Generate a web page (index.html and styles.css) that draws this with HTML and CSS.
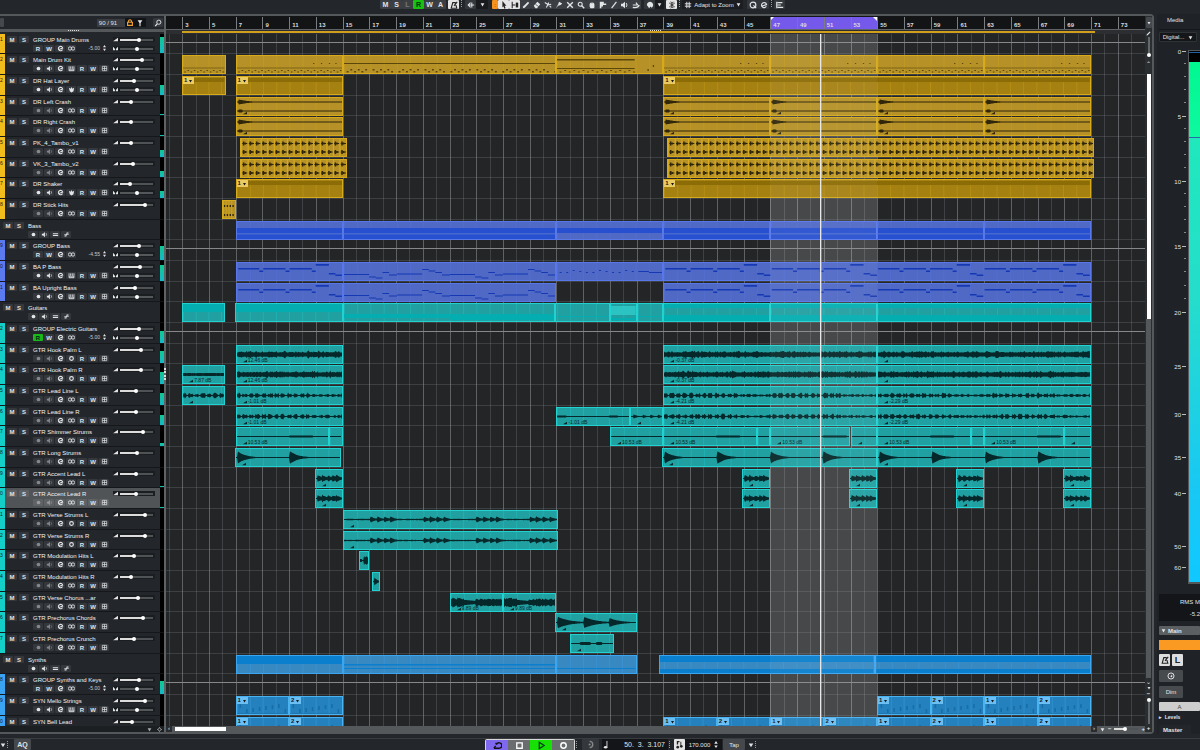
FILE: index.html
```html
<!DOCTYPE html>
<html lang="en">
<head>
<meta charset="utf-8">
<title>Project window</title>
<link rel="stylesheet" href="styles.css">
</head>
<body>
<svg class="defs" aria-hidden="true">
  <symbol id="i-rec" viewBox="0 0 8 8"><circle cx="4" cy="4" r="2.100"/></symbol>
  <symbol id="i-mon" viewBox="0 0 8 8"><path d="M1 3h1.500L4.500 1v6L2.500 5H1z"/><path d="M5.700 2.500q1.300 1.500 0 3" fill="none" stroke="currentColor" stroke-width=".8"/></symbol>
  <symbol id="i-edit" viewBox="0 0 8 8"><path d="M6.300 5.200A2.500 2.500 0 1 1 6.500 3.500L2.400 5" fill="none" stroke="currentColor" stroke-width="1.200"/></symbol>
  <symbol id="i-stereo" viewBox="0 0 8 8"><g fill="none" stroke="currentColor"><circle cx="2.300" cy="4" r="1.900"/><circle cx="5.700" cy="4" r="1.900"/></g></symbol>
  <symbol id="i-mono" viewBox="0 0 8 8"><circle cx="4" cy="4" r="2.100" fill="none" stroke="currentColor" stroke-width="1.300"/></symbol>
  <symbol id="i-keys" viewBox="0 0 8 8"><path d="M1.200 1.500v5h5.600v-5M3.100 1.500v3M4.900 1.500v3M1.200 5.500h5.600" fill="none" stroke="currentColor"/></symbol>
  <symbol id="i-drum" viewBox="0 0 8 8"><path d="M1 2l2 1 1-2 1 2 2-1-.7 4L4 7.500 2 6z"/></symbol>
  <symbol id="i-box" viewBox="0 0 8 8"><path d="M1.500 1.500h5v5h-5zM4 1.500v5M1.500 4h5" fill="none" stroke="currentColor" stroke-width=".8"/></symbol>
  <symbol id="i-eq" viewBox="0 0 8 8"><path d="M1 2.700h6v1H1zM1 4.700h6v1H1z"/></symbol>
  <symbol id="i-lines" viewBox="0 0 8 8"><path d="M1.500 5.500h3M3.500 2.500h3M2.500 6.500l3-5M1.500 4h5" fill="none" stroke="currentColor" stroke-width=".8"/></symbol>
  <symbol id="i-vol" viewBox="0 0 6 6"><path d="M0 5L6 1v4z"/></symbol>
  <symbol id="i-pan" viewBox="0 0 6 6"><path d="M0 1l2.500 2.500V5H0zM6 1L3.500 3.500V5H6z"/></symbol>
  <symbol id="i-down" viewBox="0 0 8 8"><path d="M1 2h6L4 7z"/></symbol>
  <symbol id="i-spin" viewBox="0 0 4 8"><path d="M0 3l2-3 2 3zM0 5l2 3 2-3z"/></symbol>
  <symbol id="i-lock" viewBox="0 0 10 10"><path d="M2 4h6v4H2zM3 4q0-3 2-3t2 3" fill="none" stroke="currentColor" stroke-width="1.400"/></symbol>
  <symbol id="i-filter" viewBox="0 0 10 10"><path d="M2 1.500h6L5.700 5v4H4.300V5z"/></symbol>
  <symbol id="i-find" viewBox="0 0 10 10"><circle cx="6" cy="4" r="2.600" fill="none" stroke="currentColor" stroke-width="1.200"/><path d="M4 6L1.500 9" stroke="currentColor" stroke-width="1.500"/></symbol>
  <symbol id="i-arrow" viewBox="0 0 10 10"><path d="M3 0l5 6H5.800L7 9l-1.500.6L4.300 6.600 3 8z"/></symbol>
  <symbol id="i-range" viewBox="0 0 10 10"><path d="M1.500 1v8M1.500 5h4" fill="none" stroke="currentColor" stroke-width="1.300"/><path d="M6 2h3v6H6z"/></symbol>
  <symbol id="i-pencil" viewBox="0 0 10 10"><path d="M1 9l.7-2.500L7.500 1 9 2.500 3.400 8.300z"/></symbol>
  <symbol id="i-erase" viewBox="0 0 10 10"><path d="M1 6l4.500-5L9 4 5 9H3z"/><path d="M3 4l4 3" stroke="#222" stroke-width=".8"/></symbol>
  <symbol id="i-cut" viewBox="0 0 10 10"><path d="M1 2l5 3M3 8l3-6M7 6l2 2M9 4L5 5" stroke="currentColor" stroke-width="1.400"/></symbol>
  <symbol id="i-glue" viewBox="0 0 10 10"><path d="M1 9l3-5 1-3 4 2-2 2-3 1z"/></symbol>
  <symbol id="i-x" viewBox="0 0 10 10"><path d="M1.500 1.500l7 7M8.500 1.500l-7 7" stroke="currentColor" stroke-width="1.700"/></symbol>
  <symbol id="i-zoom" viewBox="0 0 10 10"><circle cx="4" cy="4" r="2.500" fill="none" stroke="currentColor" stroke-width="1.400"/><path d="M6 6l3 3" stroke="currentColor" stroke-width="1.700"/></symbol>
  <symbol id="i-hand" viewBox="0 0 10 10"><path d="M2 4l1-2 1 1 1-2 1 2 1-1 1 2v4L7 9H3L2 7z"/></symbol>
  <symbol id="i-comp" viewBox="0 0 10 10"><path d="M1 1h5v2h3v2H5v2H3v2H1z"/></symbol>
  <symbol id="i-line" viewBox="0 0 10 10"><path d="M2 9l6-8" stroke="currentColor" stroke-width="1.500"/></symbol>
  <symbol id="i-speaker" viewBox="0 0 10 10"><path d="M0 3.500h2L5 1v8L2 6.500H0z"/><path d="M6.500 2.500q2 2.500 0 5" fill="none" stroke="currentColor" stroke-width="1.200"/></symbol>
  <symbol id="i-warp" viewBox="0 0 10 10"><path d="M1 5h6L5 2M1 8q7 1 8-3" fill="none" stroke="currentColor" stroke-width="1.500"/></symbol>
  <symbol id="i-color" viewBox="0 0 10 10"><path d="M1 5a4 4 0 1 1 6 3.500L5.500 7 4 9z"/></symbol>
  <symbol id="i-snap" viewBox="0 0 10 10"><path d="M5 1v8M1.500 2.500l7 5M8.500 2.500l-7 5M3 1l2 2 2-2M3 9l2-2 2 2" fill="none" stroke="currentColor" stroke-width="1"/></symbol>
  <symbol id="i-grid" viewBox="0 0 10 10"><path d="M3.500 1v8M6.500 1v8M1 3.500h8M1 6.500h8" stroke="currentColor" stroke-width="1.200"/></symbol>
  <symbol id="i-q" viewBox="0 0 10 10"><circle cx="5" cy="5" r="3.600" fill="none" stroke="currentColor" stroke-width="1.400"/><path d="M5.500 5.500L9 9" stroke="currentColor" stroke-width="1.500"/></symbol>
  <symbol id="i-align" viewBox="0 0 10 10"><path d="M1 1v8M2 2h6M2 5h4M2 8h7" stroke="currentColor" stroke-width="1.500"/></symbol>
  <symbol id="i-metro" viewBox="0 0 10 10"><path d="M1.500 9L3.500 2h3l2 7zM5 6l4-5" fill="none" stroke="currentColor" stroke-width="1.400"/></symbol>
  <symbol id="i-nudge" viewBox="0 0 10 10"><path d="M9 5H2M4.500 2L1.500 5l3 3M6 2v6" fill="none" stroke="currentColor" stroke-width="1.300"/></symbol>
  <symbol id="i-cycle" viewBox="0 0 10 10"><path d="M1 8h6a3 3 0 1 0-3-4M1 8l2-2.500M4 4L3 2" fill="none" stroke="currentColor" stroke-width="1.500"/></symbol>
  <symbol id="i-punch" viewBox="0 0 10 10"><path d="M4 1.500a3.500 3.500 0 0 1 0 7" fill="none" stroke="currentColor" stroke-width="1.500"/><circle cx="4" cy="5" r="1.200"/></symbol>
  <symbol id="i-stop" viewBox="0 0 10 10"><path d="M2 2h6v6H2z" fill="none" stroke="currentColor" stroke-width="1.500"/></symbol>
  <symbol id="i-play" viewBox="0 0 10 10"><path d="M2.500 1.500L8 5 2.500 8.500z" fill="none" stroke="currentColor" stroke-width="1.300"/></symbol>
  <symbol id="i-record" viewBox="0 0 10 10"><circle cx="5" cy="5" r="3" fill="none" stroke="currentColor" stroke-width="1.600"/></symbol>
  <symbol id="i-listen" viewBox="0 0 10 10"><circle cx="5" cy="5" r="3.800" fill="none" stroke="currentColor" stroke-width="1.200"/><path d="M6.500 3v4L4 5.500z"/></symbol>
  <symbol id="i-note" viewBox="0 0 10 10"><ellipse cx="4" cy="8" rx="2" ry="1.400"/><path d="M5.500 8V1" stroke="currentColor"/></symbol>
  <symbol id="i-tempo" viewBox="0 0 10 10"><path d="M2 1h3v1.500H3.500V5H2zM6 2h1v4H6z"/><circle cx="3" cy="8" r="1.500"/><circle cx="7" cy="7" r="1.500"/></symbol>
  <symbol id="i-gear" viewBox="0 0 10 10"><circle cx="5" cy="5" r="2.800" fill="none" stroke="currentColor" stroke-width="1.500"/><path d="M5 0v2M5 8v2M0 5h2M8 5h2" stroke="currentColor" stroke-width="1.300"/></symbol>
</svg>

<header class="toolbar">
  <div class="group states">
    <button>M</button><button>S</button><button class="off">L</button><button class="read">R</button><button>W</button><button>A</button>
  </div>
  <button class="lit" aria-label="Automation"><svg><use href="#i-metro"/></svg></button><span class="dots"></span>
  <div class="group nudge"><button aria-label="Auto-scroll"><svg><use href="#i-nudge"/></svg></button><button class="dark" aria-label="Auto-scroll options"><svg class="tri"><use href="#i-down"/></svg></button></div>
  <div class="group tools" id="tools"></div>
  <div class="group color"><button aria-label="Colour"><svg><use href="#i-color"/></svg></button><button class="dark" aria-label="Colour list"><svg class="tri"><use href="#i-down"/></svg></button></div>
  <button class="lit" aria-label="Snap"><svg><use href="#i-snap"/></svg></button><span class="dots"></span>
  <button class="adapt"><svg><use href="#i-grid"/></svg><span>Adapt to Zoom</span><svg class="tri"><use href="#i-down"/></svg></button>
  <div class="group"><button aria-label="Quantize"><svg><use href="#i-q"/></svg></button><button aria-label="Edit quantize"><svg><use href="#i-edit"/></svg></button></div><span class="dots"></span>
  <button aria-label="Align"><svg><use href="#i-align"/></svg></button>
</header>

<main class="workspace">
  <section class="project">
    <div class="panes">
      <aside class="tracklist">
        <div class="listhead">
          <button class="stub" aria-label="Add track"></button>
          <span class="count">90 / 91</span>
          <button class="orange" aria-label="Lock"><svg><use href="#i-lock"/></svg></button>
          <button aria-label="Filter"><svg><use href="#i-filter"/></svg></button>
          <button class="find" aria-label="Find track"><svg><use href="#i-find"/></svg></button>
        </div>
        <div class="split"><i class="grip"></i></div>
        <div class="tracks" id="tracks"></div>
        <div class="listfoot"><svg class="tri"><use href="#i-down"/></svg><svg><use href="#i-gear"/></svg></div>
      </aside>
      <div class="divider"><i></i></div>
      <section class="timeline">
        <div class="ruler" id="ruler"></div>
        <div class="split marker" id="marker"><i class="grip"></i></div>
        <div class="canvas" id="canvas"></div>
        <div class="hscroll">
          <span class="chev">‹</span><i class="hthumb"></i><span class="space"></span><span class="chev">›</span>
          <svg class="tri"><use href="#i-down"/></svg><b>−</b><input type="range" aria-label="Horizontal zoom" value="45" style="--v:45%"><b>+</b>
        </div>
      </section>
      <div class="vscroll">
        <button aria-label="Ruler options"><svg class="tri"><use href="#i-down"/></svg></button>
        <svg class="pen"><use href="#i-pencil"/></svg>
        <i class="rail"></i><i class="knob"></i><span class="chev up">⌃</span>
        <i class="vthumb"></i><i class="vrest"></i>
        <span class="chev">⌄</span><svg class="tri"><use href="#i-down"/></svg><b>−</b><i class="knob"></i><i class="rail low"></i><b>+</b>
      </div>
    </div>
  </section>

  <aside class="control">
    <div class="tabs">Media</div>
    <button class="scale">Digital... <svg class="tri"><use href="#i-down"/></svg></button>
    <div class="metering">
      <div class="marks" id="marks"></div>
      <div class="bar"><i class="peak"></i></div>
    </div>
    <div class="rms"><span>RMS M</span><span>-5.2</span></div>
    <button class="mainbtn"><svg class="tri"><use href="#i-down"/></svg>Main</button>
    <div class="orangebar"></div>
    <div class="pair"><button aria-label="Click"><svg><use href="#i-metro"/></svg></button><button>L</button></div>
    <button class="cr" aria-label="Listen"><svg><use href="#i-listen"/></svg></button>
    <button class="cr">Dim</button>
    <button class="cr a">A</button>
    <div class="levels">▸ &nbsp;Levels</div>
    <div class="master">Master</div>
  </aside>
</main>

<footer class="transport">
  <div class="left"><svg class="tri"><use href="#i-down"/></svg><span class="dots"></span><button>AQ</button></div>
  <div class="keys">
    <button class="cycle" aria-label="Cycle"><svg><use href="#i-cycle"/></svg></button><button aria-label="Stop"><svg><use href="#i-stop"/></svg></button><button class="play" aria-label="Play"><svg><use href="#i-play"/></svg></button><button aria-label="Record"><svg><use href="#i-record"/></svg></button>
  </div>
  <span class="dots"></span>
  <button class="punch" aria-label="Punch"><svg><use href="#i-punch"/></svg></button>
  <div class="pos"><svg><use href="#i-note"/></svg><span>50. &nbsp;3. &nbsp;3.107</span></div>
  <span class="dots"></span>
  <button class="tempo" aria-label="Tempo track"><svg><use href="#i-tempo"/></svg></button>
  <div class="bpm"><span>170.000</span><svg class="spin"><use href="#i-spin"/></svg></div>
  <button class="tap">Tap</button>
  <svg class="tri"><use href="#i-down"/></svg><span class="dots"></span>
</footer>
<script src="app.js"></script>
</body>
</html>
```
FILE: styles.css
```css
* { box-sizing: border-box; }
body {
  margin: 0; height: 100vh; overflow: hidden; display: flex; flex-direction: column;
  background: #23272c; color: #e2e4e6; font: 6px/8px "Liberation Sans", Arial, sans-serif;
}
button { border: 0; padding: 0; margin: 0; background: #34383d; color: inherit; font: inherit; border-radius: 1px; display: flex; align-items: center; justify-content: center; }
svg { fill: currentColor; width: 8px; height: 8px; flex: none; overflow: visible; }
svg.tri { width: 5px; height: 5px; }
.defs { position: absolute; width: 0; height: 0; }
.dots { width: 3px; height: 7px; border-left: 1px dotted #999; margin-left: 2px; flex: none; }

.toolbar { height: 14px; flex: none; display: flex; align-items: flex-start; justify-content: flex-start; padding-left: 380px; }
.toolbar button { height: 9px; width: 11px; }
.toolbar .group { display: flex; }
.states button { font-weight: bold; font-size: 7px; background: #3b3f43; }
.states .off { color: #777; }
.toolbar .states .read { background: #18c010; color: #031; }
.toolbar .lit { background: #e4e4e4; color: #222; margin-left: 2px; }
.toolbar .dark { background: #181a1d; width: 12px; }
.toolbar .nudge { margin-left: 1px; }
.tools { margin-left: 4px; }
.toolbar .tools button { background: #3b3f43; width: 11px; }
.toolbar .tools .obj { background: #f5921e; color: #222; width: 6px; }
.toolbar .tools .on { background: #e4e4e4; color: #222; }
.toolbar .color { margin-left: 3px; }
.toolbar .color .dark { width: 9px; }
.toolbar .adapt { width: 61px; background: #1b1d20; gap: 2px; margin-right: 4px; }

.workspace { flex: 1; min-height: 0; display: flex; gap: 3px; margin-bottom: 4px; }
.project { flex: 1; min-width: 0; border: 2px solid #55585b; border-left: 0; border-radius: 0 4px 4px 0; background: #1c1f22; }
.panes { display: flex; height: 100%; }
.tracklist { width: 164px; flex: none; display: flex; flex-direction: column; min-height: 0; }
.listhead { height: 13px; flex: none; display: flex; align-items: center; padding-right: 1px; background: #23272c; }
.listhead button { height: 9px; width: 11px; background: #111316; }
.listhead button.stub { width: 4px; background: #45484c; margin-right: 93px; }
.listhead .count { width: 29px; height: 8px; background: #3a3d41; padding-left: 2px; }
.listhead .orange { color: #f5a033; }
.listhead button.find { background: #34383d; margin-left: 7px; }
.split { height: 5px; flex: none; background: #55585b; display: flex; justify-content: center; border-bottom: 2px solid #17191b; }
.grip { width: 11px; height: 1px; margin-top: 1px; border-top: 1px dotted #ddd; }
.tracklist .split { border-bottom-color: #23272c; padding-right: 18px; }
.tracks { flex: 1; min-height: 0; overflow: hidden; background: #000; }
.track, .lane { height: 21px; }
.track:nth-child(3n+1), .lane:nth-child(3n+1) { height: 20px; }
.track { display: flex; }
.inner { width: 160px; display: flex; background: #23272c; border-bottom: 1px solid #15171a; }
.strip { width: 5px; background: var(--c); color: #1a1a1a; font-size: 5px; line-height: 10px; flex: none; overflow: hidden; }
.ms { width: 28px; display: flex; gap: 2px; padding: 2px 0 0 2px; flex: none; }
.ms button { width: 10px; height: 7px; background: #34383d; font-weight: bold; }
.info { flex: 1; min-width: 0; padding-top: 2px; }
.name { height: 9px; font-size: 6px; line-height: 8px; white-space: nowrap; color: #f0f2f4; }
.ctl { display: flex; gap: 1px; }
.ctl button { width: 10px; height: 7px; background: #34383d; font-weight: bold; }
.ctl svg { width: 7px; height: 7px; }
.ctl .dim { color: #83878b; }
.ctl .green { background: #18b818; color: #021; }
.ctl output { width: 23px; text-align: right; font-size: 5px; line-height: 7px; color: #c8cacd; }
.ctl .spin { width: 3px; height: 6px; margin: 0 0 0 2px; }
.faders { width: 48px; padding: 3px 0 0 1px; flex: none; }
.fader { display: flex; align-items: center; width: 42px; height: 5px; gap: 2px; margin-bottom: 4px; background: #1b1e21; }
.fader svg { width: 5px; height: 5px; }
input[type=range] { appearance: none; width: 33px; height: 4px; margin: 0; background: none; flex: none; }
input[type=range]::-webkit-slider-runnable-track { height: 2px; background: linear-gradient(to right, #dcdcdc var(--v), #505356 var(--v)); }
input[type=range]::-webkit-slider-thumb { appearance: none; width: 4px; height: 4px; margin-top: -1px; border-radius: 2px; background: #fff; }
.fader.pan input::-webkit-slider-runnable-track { background: #55585b; }
.folder .strip { display: none; }
.folder .ms { padding-left: 3px; gap: 1px; }
.track.sel .inner { background: #515457; }
.track.sel button { background: #5f6265; }
.track.sel .ctl .dim { color: #999; }
.vu { flex: 1; display: flex; align-items: flex-end; border-bottom: 1px solid #111; }
.vu i { width: 4px; background: linear-gradient(#10c890, #16b8c8); }
.listfoot { height: 6px; flex: none; display: flex; gap: 5px; justify-content: flex-end; align-items: center; padding-right: 2px; color: #aaa; }
.listfoot svg { width: 5px; height: 5px; }
.divider { width: 2px; background: #5f6265; display: flex; align-items: center; flex: none; }
.divider i { height: 12px; width: 2px; border-left: 2px dotted #ddd; }

.timeline { flex: 1; min-width: 0; display: flex; flex-direction: column; }
.ruler { height: 13px; position: relative; background: #121416; overflow: hidden; flex: none; }
.tick { position: absolute; top: 1px; bottom: 0; border-left: 1px solid #7a7d80; font-weight: bold; font-size: 6px; line-height: 16px; padding-left: 2px; color: #d8dadc; }
.loop { position: absolute; top: 1px; bottom: 0; background: #7459ea; }
.loop::before, .loop::after { content: ""; position: absolute; top: 0; border-top: 4px solid #fff; }
.loop::before { left: 0; border-right: 4px solid transparent; }
.loop::after { right: 0; border-left: 4px solid transparent; }
.marker { position: relative; border-bottom: 0; background: #2c2e31; border-top: 1px solid #606366; }
.marker .bar0 { position: absolute; top: 1px; height: 2px; background: #d0a01c; }
.marker .grip { margin: 0; }
.canvas { flex: 1; min-height: 0; position: relative; overflow: hidden; background: #232527; }
.gl { position: absolute; top: 0; bottom: 0; width: 1px; background: #3f4144; }
.gl.odd { background: #5f6164; }
.zone, .shine, .head { position: absolute; top: 0; bottom: 0; }
.zone { background: rgba(255,255,255,.12); }
.shine { background: rgba(255,255,255,.05); }
.head { width: 1px; background: #e8e8e8; box-shadow: 1px 0 rgba(230,230,230,.35); }
.lane { position: relative; border-bottom: 1px solid rgba(130,135,140,.28); }
.lane.bus::after { content: ""; position: absolute; left: 0; right: 0; top: 8px; height: 1px; background: #85878a; }
.clip { position: absolute; top: 1px; height: 19px; overflow: hidden; border: 1px solid var(--e); background: var(--b); color: var(--w); }
.clip > svg { position: absolute; left: 0; top: 0; width: 100%; height: 100%; overflow: hidden; }
.yel, .aud { --b: #b59127; --e: #d6aa1b; --w: #5c470a; }
.aud { --w: #30270a; }
.drk { --b: #a58112; --e: #d6aa1b; --w: #8c6c06; }
.blu { --b: #5069c4; --e: #5878ea; --w: #1538b4; }
.tea { --b: #21a0a2; --e: #22d2d0; --w: #06282a; }
.fol { --b: #21a0a2; --e: #22d2d0; --w: #04adb0; }
.syn { --b: #3889c2; --e: #3ba6ef; --w: #0a7fcd; }
.prt { --b: #2481bd; --e: #49b3f2; --w: #176da6; }
.db { position: absolute; left: 6px; bottom: 0; font-size: 5px; line-height: 5px; white-space: nowrap; display: flex; align-items: center; gap: 1px; }
.db svg { width: 4px; height: 4px; }
.badge { position: absolute; left: 0; top: 0; width: 11px; height: 7px; display: flex; align-items: center; justify-content: center; gap: 1px; font-size: 6px; font-weight: bold; line-height: 7px; color: #14181c; background: #ecca62; }
.badge svg.tri { width: 5px; height: 4px; }
.prt .badge { background: #6cbff2; }
.hscroll { height: 6px; flex: none; display: flex; align-items: center; background: #55585b; gap: 3px; }
.hscroll .chev { width: 6px; text-align: center; background: #2a2d30; height: 6px; line-height: 5px; }
.hthumb { width: 51px; height: 4px; background: #fff; }
.space { flex: 1; }
.hscroll input { width: 24px; }
.vscroll { width: 7px; flex: none; display: flex; flex-direction: column; align-items: center; background: #2b2e31; }
.vscroll button { width: 6px; height: 11px; margin: 1px 0 2px; background: #45484c; }
.vscroll svg.tri { width: 4px; height: 4px; }
.pen { width: 5px; height: 5px; margin: 1px; }
.rail { width: 2px; height: 16px; background: #65686b; }
.knob { width: 4px; height: 4px; border-radius: 2px; background: #fff; }
.chev { line-height: 8px; }
.chev.up { margin-top: 3px; height: 14px; }
.vthumb { width: 4px; height: 245px; background: #fff; }
.vrest { width: 5px; flex: 1; background: #55585b; }
.rail.low { height: 22px; }

.control { width: 43px; flex: none; overflow: hidden; background: #1f2226; display: flex; flex-direction: column; padding-left: 2px; white-space: nowrap; }
.tabs { height: 16px; line-height: 13px; padding-left: 8px; flex: none; border-bottom: 1px solid #15171a; margin-bottom: 2px; }
.scale { width: 38px; height: 10px; flex: none; background: #14161a; gap: 4px; border: 1px solid #303336; }
.metering { display: flex; margin-top: 8px; height: 534px; flex: none; }
.marks { width: 29px; }
.mark { padding-right: 2px; display: flex; justify-content: flex-end; gap: 1px; line-height: 4px; position: relative; font-size: 6px; }
.mark::after { content: ""; width: 4px; height: 1px; background: #bbb; margin-top: 1px; }
.mark i { position: absolute; right: 2px; width: 2px; height: 1px; background: #888; }
.bar { flex: 1; border: 1px solid #55585b; border-width: 1px 0 2px 1px; background: linear-gradient(#000 11px, #00f890 11px, #10f8a0 86px, #2867a8 86px, #2867a8 87px, #20e8bc 87px, #24ddcc 250px, #18c8f4 440px, #10c8ff); }
.peak { display: block; height: 1px; background: #2060a0; margin-top: 1px; }
.rms { background: #131518; margin-top: 10px; height: 27px; display: flex; flex-direction: column; align-items: flex-end; padding-top: 4px; gap: 4px; flex: none; }
.mainbtn { height: 9px; margin-top: 5px; flex: none; background: #5c5f62; justify-content: flex-start; gap: 2px; padding-left: 2px; font-weight: bold; }
.orangebar { height: 10px; background: #fb9a22; margin: 5px 0 4px; flex: none; }
.pair { display: flex; gap: 2px; }
.pair button { width: 11px; height: 12px; background: #dedede; color: #222; font-weight: bold; font-size: 9px; }
.cr { width: 24px; height: 12px; margin-top: 4px; background: #484b4e; flex: none; }
.cr.a { width: 41px; height: 9px; background: #cdcdcd; color: #444; }
.levels { margin-top: 2px; font-weight: bold; font-size: 5px; }
.master { margin-top: 4px; padding-left: 4px; font-weight: bold; background: #23272c; width: 32px; line-height: 11px; }

.transport { height: 12px; flex: none; display: flex; background: #23272c; align-items: stretch; border-top: 1px solid #3a3d40; overflow: hidden; }
.transport svg { width: 9px; height: 9px; }
.transport svg.tri { width: 6px; height: 6px; margin-top: 3px; }
.transport .dots { margin: 2px 2px 0 1px; }
.left { width: 485px; display: flex; }
.left button { width: 17px; font-size: 7px; font-weight: bold; background: #45484c; margin-left: 2px; }
.keys { display: flex; border: 1px solid #d8d8d8; border-bottom: 0; border-radius: 2px 2px 0 0; }
.keys button { width: 22px; background: #6a6d70; color: #fff; border-radius: 0; }
.keys .cycle { background: #8068ee; color: #111; }
.keys .play { background: #16e004; color: #032; }
.punch { width: 17px; background: #34383d; color: #888; margin: 0 3px 0 1px; }
.pos { width: 66px; display: flex; background: #131518; justify-content: space-between; align-items: center; font-size: 7px; padding-right: 3px; }
.transport .tempo { width: 11px; background: #e4e4e4; color: #222; }
.bpm { width: 37px; background: #131518; display: flex; align-items: center; justify-content: center; gap: 4px; }
.transport .spin { width: 4px; height: 7px; }
.tap { width: 22px; background: #45484c; margin: 0 3px 0 1px; }
```
FILE: app.js
```js
const BAR = 13.366, FIRST = 1.788, SPAN = 73.245;
const pct = bar => ((bar - FIRST) / SPAN * 100).toFixed(3) + '%';
const wid = bars => (bars / SPAN * 100).toFixed(3) + '%';
const use = (id, cls = '') => `<svg class="${cls}"><use href="#i-${id}"/></svg>`;

document.getElementById('tools').innerHTML = '<button class="obj" aria-label="Mode">:</button>' +
  ['arrow', 'range', 'pencil', 'erase', 'cut', 'glue', 'x', 'zoom', 'hand', 'comp', 'line', 'speaker', 'warp']
    .map((n, i) => `<button class="${i < 2 ? 'on' : ''}" aria-label="${n}">${use(n)}</button>`).join('');

/* deterministic noise */
let seed = 7;
const rnd = () => (seed = (seed * 16807) % 2147483647) / 2147483647;

/* closed outline of a waveform round y = c; amp receives the bar offset */
function wave(len, amp, c = 8.5) {
  const n = Math.round(len * BAR);
  let up = '', down = '';
  for (let x = 0; x <= n; x++) {
    const a = Math.max(.4, amp(x / BAR));
    up += `L${x} ${(c - a).toFixed(1)}`;
    down = `L${x} ${(c + a).toFixed(1)}` + down;
  }
  return `<path d="M0 ${c}${up}${down}z"/>`;
}
const hits = (list, size, fall) => b => {
  let a = .4;
  for (const h of list) if (b >= h) a = Math.max(a, size * Math.exp(-(b - h) / fall));
  return a;
};
const steps = (from, to, by) => { const r = []; for (let v = from; v < to; v += by) r.push(v); return r; };
const rect = (x, y, w, h, o = '') => `<rect x="${(x * BAR).toFixed(1)}" y="${y}" width="${(w * BAR).toFixed(1)}" height="${h}" ${o}/>`;

const draw = {
  dense: l => wave(l, () => 1.9 + rnd() * rnd() * 2.2),
  flat: l => wave(l, () => 1.3 + rnd() * .3),
  beads: l => wave(l, b => (Math.sin(b * 13) > -.5 ? 1 + rnd() * 1.9 : .5) * (b % 8 > 5.5 ? .6 : 1)),
  tiny: l => wave(l, b => b % 4 < .7 ? .9 : .5),
  tri: l => wave(l, hits([.2, .9, 1.5, 2.1], 2.2, .3)),
  shim: l => wave(l, b => (b % 8 > 4 && b % 8 < 5.8) ? 1 : .5),
  long: l => wave(l, hits(steps(.1, l, 4), 6.5, .6)),
  accent: l => wave(l, b => hits([.1, .5, .9, 1.3, 1.6], 4, .4)(b) * (.75 + rnd() * .35)),
  verse: l => wave(l, b => { const p = b % 4; return p < 2 ? .5 + rnd() * .3 : hits([2, 2.5, 3, 3.5], 3.3, .35)(p); }),
  blob: l => wave(l, b => b < .2 ? 1.5 : b < .35 ? .6 : 2.5 + rnd() * 2),
  hit1: l => wave(l, hits([.08], 5, .3)),
  chorus: l => wave(l, b => b < 1 ? 3 + rnd() * 2 : b < 1.9 ? 4 - b * 1.3 : 2.5 + rnd() * 1.5),
  chord: l => wave(l, b => Math.max(hits([.1, 2.1], 6, .9)(b), hits([4.1], 4.5, .8)(b))),
  crunch: l => wave(l, b => (b > .7 && b < 1.5) || (b > 2 && b < 2.4) ? 1.4 : .5),
  crash: l => wave(l, hits([.1], 2.8, .7), 4) + wave(l, b => b > .1 && b < .4 ? 1.5 : .5, 13),
  tambo: l => steps(0, l - .1, .5).map(b => rect(b, 0, .09, 17, 'fill="var(--e)"') + rect(b + .1, 4, .4, 1) + rect(b + .1, 12.500, .4, 1) + rect(b + .14, 2.5, .12, 4) + rect(b + .14, 11, .12, 4) + rect(b + .26, 3.5, .12, 2) + rect(b + .26, 12, .12, 2)).join(''),
  sticks: l => steps(0, l, .25).map(b => rect(b, 0, .06, 17, 'fill="var(--e)"') + rect(b + .08, 4, .12, 2) + rect(b + .08, 13, .12, 2)).join(''),
  kit: l => rect(0, 11.5, l, 1, 'opacity=".6"') + steps(.1, l, .25).map((b, i) => rect(b, i % 2 ? 14 : 15.5, .12, 1)).join('') + [5.8, 6.4, 7, 7.5].filter(b => b < l).map(b => rect(b, 7, .1, 1)).join(''),
  kit2: l => rect(0, 7, l, 1) + steps(.2, l, .28).map((b, i) => i % 7 == 6 ? '' : rect(b, i % 2 ? 13 : 15, .14, 1.5)).join(''),
  kit3: l => rect(0, 3, l * .74, 1.5) + rect(0, 12, l * .74, 1) + steps(.2, l * .74, .35).map((b, i) => rect(b, i % 2 ? 14 : 15.5, .14, 1)).join('') + rect(6.9, 13, .1, 2) + rect(7.3, 9, .1, 2),
  hat: l => rect(0, 1, l, 4),
  bass: l => steps(0, l, 8).map(o => rect(o + .1, 5, 1.6, 1.5) + rect(o + 1.7, 7.5, .3, 1.5) + rect(o + 2, 5, 1.7, 1.5) + rect(o + 3.7, 7.5, .3, 1.5) + rect(o + 4, 5, 1.7, 1.5) + rect(o + 5.7, 7.5, .3, 1.5) + rect(o + 6, 1, 1, 1.7) + rect(o + 7, 10, .5, 1.5) + rect(o + 7.5, 11.5, .5, 1.5)).join(''),
  bass2: l => steps(0, l, 4).map((o, i) => i % 2 == 0
    ? rect(o, 11, 1.9, 1) + rect(o + 1.9, 13.5, .5, 1) + rect(o + 2.4, 14.5, .5, 1) + rect(o + 2.9, 9, .5, 1) + rect(o + 3.4, 11.5, .6, 1)
    : rect(o, 10.5, 1.9, 1) + rect(o + 1.9, 6, .5, 1) + rect(o + 2.4, 7.5, .5, 1) + rect(o + 2.9, 9, .5, 1) + rect(o + 3.4, 11.5, .6, 1)).join(''),
  bass3: l => steps(.2, l - 2, .5).map((b, i) => rect(b, [9, 9, 7, 8][i % 4], .15, 1)).join('') + rect(l - 1.8, 8, .8, 1) + rect(l - 1, 9, 1, 1),
  fbass: l => rect(0, 6, l, 12, 'fill="#2750d0"') + rect(0, 11, l, 1.5, 'fill="#4668cf"'),
  fbass2: l => rect(0, 6, l, 5, 'fill="#2750d0"'),
  ftop: l => rect(0, 0, l, 8), fbot: l => rect(0, 10, l, 4) + rect(l * .5, 13, l * .5, 3),
  fall: l => rect(0, 2, l, 9, 'fill="#2cc4c2"') + rect(0, 14, l, 2), fthin: l => rect(0, 8, l, 1.5) + rect(0, 12, l, 1),
  fone: l => rect(0, 12, l, 1), fsyn: l => rect(0, 0, l, 6) + rect(0, 13, l, 5),
  fguit: l => rect(0, 0, l, 4) + rect(0, 11, l, 6),
  ticks: l => steps(.2, l, .5).map((b, i) => rect(b, 7 + (i * 5) % 6, .12, 4)).join('') + rect(0, 16, l, 1, 'opacity=".5"')
};

/* clip: [start, end, drawing, label] */
const every = (from, to, by, kind, label) => steps(from, to, by).map(s => [s, Math.min(to, s + by), kind, label]);
const parts = (from, to) => steps(from, to, 4).map((s, i) => [s, s + 4, 'ticks', '#' + (i % 2 + 1)]);
const crash = [[7, 15, 'crash', ''], ...every(39, 71, 8, 'crash', '')];
const tambo = [[7.3, 15.3, 'tambo'], [39.25, 71.25, 'tambo']];
const accents = [[12.9, 15, 'accent', ''], [44.9, 47, 'accent', ''], [52.9, 55, 'accent', ''], [60.9, 63, 'accent', ''], [68.9, 71, 'accent', '']];
const hat = [[7, 15, 'hat', '#1'], [39, 71, 'hat', '#1']];
const Y = '#f0bd1d', B = '#5b7af0', T = '#14cfc8', S = '#3ba4f2';

/* [name, kind, strip digit, colour, volume, meter height, clip class, clips, value] */
const tracks = [
  ['GROUP Main Drums', 'G', 1, Y, 58, 16, '', [], '-5.00'],
  ['Main Drum Kit', 'I', 2, Y, 68, 0, 'yel', [[3, 6.25, 'kit'], [7, 15, 'kit'], [15, 31, 'kit2'], [31, 39, 'kit3'], ...every(39, 71, 8, 'kit')]],
  ['DR Hat Layer', 'D', 2, Y, 43, 10, 'drk', [[3, 6.25, 'hat', '#1'], ...hat]],
  ['DR Left Crash', 'A', 3, Y, 32, 1, 'aud', crash],
  ['DR Right Crash', 'A', 4, Y, 32, 1, 'aud', crash],
  ['PK_4_Tambo_v1', 'A', 5, Y, 32, 7, 'aud', tambo],
  ['VK_3_Tambo_v2', 'A', 6, Y, 37, 6, 'aud', tambo],
  ['DR Shaker', 'D', 7, Y, 27, 7, 'drk', hat],
  ['DR Stick Hits', 'A', 8, Y, 78, 0, 'aud', [[6, 7, 'sticks']]],
  ['Bass', 'F', '', '', 0, 0, 'blu', [[7, 15, 'fbass'], [15, 31, 'fbass'], [31, 39, 'fbass2'], ...every(39, 71, 8, 'fbass')]],
  ['GROUP Bass', 'G', 9, B, 60, 14, '', [], '-4.55'],
  ['BA P Bass', 'I', 0, B, 62, 16, 'blu', [[7, 15, 'bass'], [15, 31, 'bass2'], [31, 39, 'bass3'], [39, 71, 'bass']]],
  ['BA Upright Bass', 'I', 1, B, 45, 0, 'blu', [[7, 15, 'bass'], [15, 31, 'bass2'], [39, 71, 'bass']]],
  ['Guitars', 'F', '', '', 0, 0, 'fol', [[3, 6.2, 'ftop'], [6.95, 15, 'ftop'], [15, 30.9, 'fbot'], [30.9, 35, 'fone'], [35, 37, 'fall'], [37, 39, 'fone'], [39, 47, 'fguit'], [47, 55, 'fguit'], [55, 71, 'fguit']]],
  ['GROUP Electric Guitars', 'G', 2, T, 58, 12, '', [], '-5.00'],
  ['GTR Hook Palm L', 'M', 3, T, 66, 12, 'tea', [[7, 15, 'dense', '12.46 dB'], [39, 55, 'dense', '-0.37 dB'], [55, 71, 'dense', '']]],
  ['GTR Hook Palm R', 'M', 4, T, 66, 12, 'tea', [[3, 6.2, 'flat', '7.87 dB'], [7, 15, 'dense', '12.46 dB'], [39, 55, 'dense', '-0.37 dB'], [55, 71, 'dense', '']]],
  ['GTR Lead Line L', 'A', 5, T, 48, 12, 'tea', [[3, 6.2, 'beads', ''], [7, 15, 'beads', '-1.01 dB'], [39, 55, 'beads', '-4.21 dB'], [55, 71, 'beads', '-2.29 dB']]],
  ['GTR Lead Line R', 'A', 6, T, 48, 10, 'tea', [[7, 15, 'beads', '-1.01 dB'], [31, 36.5, 'tiny', '-1.01 dB'], [36.5, 39, 'tri', ''], [39, 55, 'beads', '-4.21 dB'], [55, 71, 'beads', '-2.29 dB']]],
  ['GTR Shimmer Strums', 'A', 7, T, 72, 3, 'tea', [[7, 14, 'shim', '10.53 dB'], [14, 15, 'shim'], [35, 39, 'shim', '10.53 dB'], [39, 46, 'shim', '10.53 dB'], [46, 47, 'shim'], [47, 53, 'shim', '10.53 dB'], [53, 55, 'shim', ''], [55, 62, 'shim', '10.53 dB'], [62, 63, 'shim'], [63, 69, 'shim', '10.53 dB'], [69, 71, 'shim', '']]],
  ['GTR Long Strums', 'A', 8, T, 52, 0, 'tea', [[6.95, 14.9, 'long', ''], [38.9, 55, 'long', ''], [55, 71, 'long', '']]],
  ['GTR Accent Lead L', 'A', 9, T, 48, 1, 'tea', accents],
  ['GTR Accent Lead R', 'A', 0, T, 48, 1, 'tea', accents],
  ['GTR Verse Strums L', 'M', 1, T, 79, 0, 'tea', [[15, 31.1, 'verse', '']]],
  ['GTR Verse Strums R', 'M', 2, T, 79, 0, 'tea', [[15, 31.1, 'verse', '']]],
  ['GTR Modulation Hits L', 'A', 3, T, 42, 0, 'tea', [[16.2, 17, 'blob']]],
  ['GTR Modulation Hits R', 'A', 4, T, 31, 0, 'tea', [[17.2, 17.8, 'hit1']]],
  ['GTR Verse Chorus ...ar', 'A', 5, T, 55, 0, 'tea', [[23, 27, 'chorus', '9.89 dB'], [27, 31, 'chorus', '9.89 dB']]],
  ['GTR Prechorus Chords', 'A', 6, T, 72, 0, 'tea', [[30.9, 37, 'chord', '']]],
  ['GTR Prechorus Crunch', 'A', 7, T, 41, 0, 'tea', [[32, 35.3, 'crunch', '']]],
  ['Synths', 'F', '', '', 0, 0, 'syn', [[7, 15, 'ftop'], [15, 31, 'fthin'], [31, 37, 'fone'], [38.7, 54.8, 'fsyn'], [54.8, 71, 'fsyn']]],
  ['GROUP Synths and Keys', 'G', 8, S, 58, 13, '', [], '-5.00'],
  ['SYN Mello Strings', 'I', 9, S, 79, 0, 'prt', [...parts(7, 15), ...parts(55, 71)]],
  ['SYN Bell Lead', 'C', 0, S, 36, 0, 'prt', [...parts(7, 15), ...parts(39, 71)]]
];

const btn = (body, label, cls = '') => `<button class="${cls}" aria-label="${label}">${body}</button>`;
function controls(kind, value, name) {
  if (kind === 'C') return '';
  const io = dim => btn(use('rec'), 'Record enable', dim) + btn(use('mon'), 'Monitor', dim);
  if (kind === 'F') return io('') + btn(use('eq'), 'Group editing') + btn(use('lines'), 'Lanes');
  const edit = btn(use('edit'), 'Edit channel');
  if (kind === 'G') return btn('R', 'Read', name.includes('Electric') ? 'green' : '') + btn('W', 'Write') + edit + btn(use('stereo'), 'Stereo') + `<output>${value}</output>` + use('spin', 'spin');
  const icon = { I: 'keys', D: 'drum', A: 'stereo', M: 'mono' }[kind];
  return io(kind === 'A' || kind === 'M' ? 'dim' : '') + edit + btn(use(icon), icon) + btn('R', 'Read') + btn('W', 'Write') + btn(use('box'), 'Freeze');
}
const fader = (v, icon, label) => `<label class="fader ${icon}">${use(icon)}<input type="range" value="${v}" style="--v:${v}%" aria-label="${label}"></label>`;

document.getElementById('tracks').innerHTML = tracks.map(([name, kind, no, col, vol, vu, , , value]) => `
  <div class="track ${kind === 'F' ? 'folder' : ''} ${name === 'GTR Accent Lead R' ? 'sel' : ''}">
    <div class="inner"><div class="strip" style="--c:${col}">${no}</div>
      <div class="ms"><button>M</button><button>S</button></div>
      <div class="info"><div class="name">${name}</div><div class="ctl">${controls(kind, value, name)}</div></div>
      ${kind === 'F' ? '' : `<div class="faders">${fader(vol, 'vol', name + ' volume')}${'GID'.includes(kind) ? fader(50, 'pan', name + ' pan') : ''}</div>`}
    </div><div class="vu"><i style="height:${vu}px"></i></div>
  </div>`).join('');

function clip([s, e, kind, label], cls) {
  const len = e - s, w = len * BAR;
  const lines = steps(Math.ceil(s) - s, len, 1).map(b => rect(b, 0, .07, 17, 'fill="var(--e)" opacity=".35"')).join('');
  let tag = '';
  if (label !== undefined) tag = label[0] === '#'
    ? `<span class="badge">${label[1]}${use('down', 'tri')}</span>`
    : `<span class="db">${use('vol')}${label}</span>`;
  return `<div class="clip ${cls}" style="left:${pct(s)};width:${wid(len)}"><svg viewBox="0 0 ${w.toFixed(1)} 17" preserveAspectRatio="none">${lines}${draw[kind](len)}</svg>${tag}</div>`;
}
let grid = '';
for (let b = 2; b <= 75; b++) grid += `<i class="gl ${b % 2 ? 'odd' : ''}" style="left:${pct(b)}"></i>`;
const region = `left:${pct(47)};width:${wid(8)}`;
document.getElementById('canvas').innerHTML = grid + `<div class="zone" style="${region}"></div>` +
  '<div class="lanes">' + tracks.map(t => `<div class="lane ${t[1] === 'G' ? 'bus' : ''}">${t[7].map(c => clip(c, t[6])).join('')}</div>`).join('') + '</div>' +
  `<div class="shine" style="${region}"></div><i class="head" style="left:${pct(50.7)}"></i>`;

document.getElementById('ruler').innerHTML = `<div class="loop" style="${region}"></div>` +
  steps(3, 76, 2).map(b => `<span class="tick" style="left:${pct(b)}">${b < 75 ? b : ''}</span>`).join('');
document.getElementById('marker').insertAdjacentHTML('beforeend', `<div class="bar0" style="left:${pct(3)};width:${wid(68.3)}"></div>`);

document.getElementById('marks').innerHTML = [[0, 65], [5, 65], [10, 65], [15, 66], [20, 54], [25, 48], [30, 43], [35, 36], [40, 53], [50, 21], [60, 10]]
  .map(([v, h]) => `<div class="mark" style="height:${h}px">${v}${h > 60 ? [.2, .4, .6, .8].map(f => `<i style="top:${Math.round(h * f)}px"></i>`).join('') : ''}</div>`).join('');
```
